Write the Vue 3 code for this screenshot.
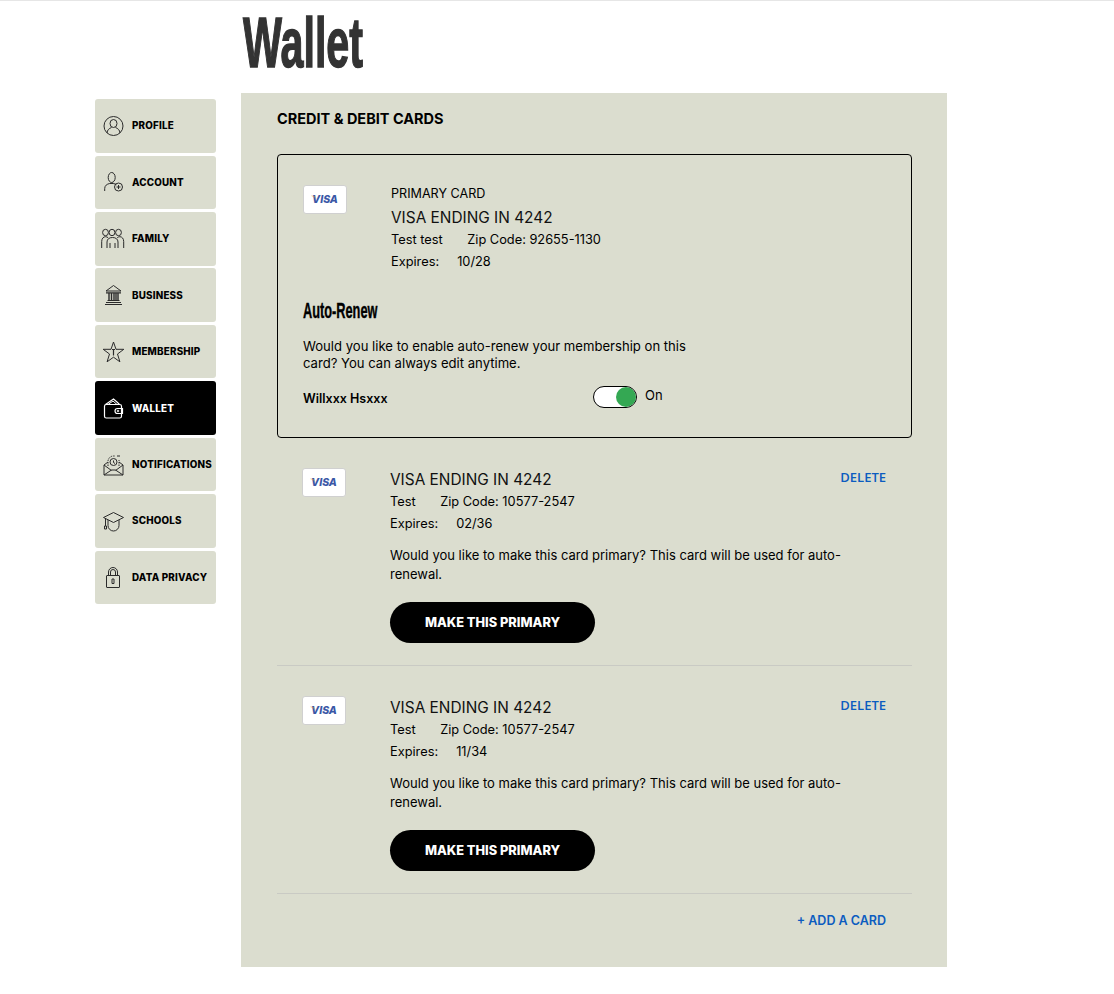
<script setup>
const navItems = [
  { label: 'PROFILE', icon: 'profile' },
  { label: 'ACCOUNT', icon: 'account' },
  { label: 'FAMILY', icon: 'family' },
  { label: 'BUSINESS', icon: 'business' },
  { label: 'MEMBERSHIP', icon: 'membership' },
  { label: 'WALLET', icon: 'wallet', active: true },
  { label: 'NOTIFICATIONS', icon: 'notifications' },
  { label: 'SCHOOLS', icon: 'schools' },
  { label: 'DATA PRIVACY', icon: 'privacy' }
]

const cards = [
  { name: 'Test', zip: '10577-2547', expires: '02/36' },
  { name: 'Test', zip: '10577-2547', expires: '11/34' }
]
</script>

<template>
  <div class="page">
    <div class="top-line"></div>
    <h1 class="page-title"><span>Wallet</span></h1>

    <nav class="sidebar">
      <a v-for="item in navItems" :key="item.label" :class="['nav-item', { active: item.active }]">
        <svg class="nav-icon" viewBox="0 0 24 24" fill="none" stroke="currentColor" stroke-width="1">
          <template v-if="item.icon === 'profile'">
            <circle cx="12.500" cy="12" r="9.500" />
            <ellipse cx="12.500" cy="9.500" rx="3.500" ry="4" />
            <path d="M6 19c.2-3 2.200-4.600 4.500-5.500M19 19c-.2-3-2.200-4.600-4.500-5.500" />
          </template>
          <template v-else-if="item.icon === 'account'">
            <ellipse cx="10.700" cy="7.500" rx="3.500" ry="5" />
            <path d="M3.700 21v-2.500c0-2.800 2.200-4.500 5-5h3.500c1.400.2 2.400.6 3.200 1.200" />
            <circle cx="17.500" cy="17" r="4" />
            <path d="M17.500 15v4M15.500 17h4" />
          </template>
          <template v-else-if="item.icon === 'family'">
            <ellipse cx="4.500" cy="5.500" rx="2.900" ry="3.200" />
            <ellipse cx="11" cy="5.500" rx="2.900" ry="3.200" />
            <ellipse cx="17.500" cy="5.500" rx="2.900" ry="3.200" />
            <path d="M.7 21v-6.500c0-3 1.800-4.800 3.800-4.800 1 0 2 .4 2.700 1.100M22.700 21v-6.500c0-3-1.800-4.800-3.800-4.800-1 0-2 .4-2.700 1.100" />
            <path d="M6 21v-6c0-2.800 2.200-4.500 5.500-4.500S17 12.200 17 15v6M9 21v-5M14 21v-5" />
          </template>
          <template v-else-if="item.icon === 'business'">
            <path d="M12.500 2.500 5 8h15z" />
            <path d="M5 9.800h15M6.500 17.500h12M5 19.500h15M4 21.500h17" stroke-width="1.200" />
            <path d="M8 10v7M10.500 10v7M13 10v7M15 10v7M17 10v7" stroke-width="1.400" />
          </template>
          <template v-else-if="item.icon === 'membership'">
            <path d="m12.500 2 2.500 7.300h7.800l-6.300 4.700 2.400 7.800-6.400-4.600-6.400 4.600 2.400-7.800-6.300-4.700H10z" />
            <path d="M12.500 9.500v6M11 9.500h3" stroke-width="1.200" />
          </template>
          <template v-else-if="item.icon === 'wallet'">
            <path d="M4.500 8.500 12.500 3l3.500 3 2.500 2.500" stroke-width="1.100" />
            <path d="M7 8.500l5-3.500 4 3.500" />
            <rect x="3.500" y="8.500" width="17" height="13.500" rx="1.800" stroke-width="1.200" />
            <path d="M21.500 12.500h-5a2.500 2.500 0 0 0 0 5h5z" stroke-width="1.200" />
            <circle cx="17" cy="15" r="0.800" />
          </template>
          <template v-else-if="item.icon === 'notifications'">
            <path d="M3 12v10h19V12l-4-3M7 9l-4 3 7.500 5.500M22 12l-7.500 5.500M3 22l7.500-5h4l7.500 5" />
            <path d="M7 13V8.500a5.500 5.500 0 0 1 5.500-5.500h1.500" stroke-dasharray="1.500 1" />
            <path d="M18 13V7" stroke-dasharray="1.500 1" />
            <circle cx="12.500" cy="9" r="3.500" />
            <path d="M12.500 7.500v2l1.500 1M16 3h3" />
          </template>
          <template v-else-if="item.icon === 'schools'">
            <path d="M2.500 8.500 12.500 3.500l10 5-10 5z" />
            <path d="M7 11v5.500a5.500 5.500 0 0 0 11 0V11" />
            <path d="M4.500 9.500V17M3.500 17h2v3h-2z" />
          </template>
          <template v-else>
            <rect x="5.500" y="10.500" width="13" height="12" rx="0.500" />
            <path d="M7.500 10.500V7a4.500 4.500 0 0 1 9 0v3.500M9.500 10.500V7a2.500 2.500 0 0 1 5 0v3.500" />
            <path d="M11 14h2v4.500h-2z" />
          </template>
        </svg>
        <span class="nav-label">{{ item.label }}</span>
      </a>
    </nav>

    <main class="panel">
      <h2 class="panel-title">CREDIT &amp; DEBIT CARDS</h2>

      <section class="primary-card">
        <div class="card-row">
          <div class="visa">
            <svg class="visa-flick" viewBox="0 0 6 4"><path d="M0 1c2-.6 4 .4 5.500 3C4 2 2 1.300 0 1z" fill="#e5a33b" /></svg>
            <span>VISA</span>
          </div>
          <div class="card-info">
            <div class="primary-label">PRIMARY CARD</div>
            <div class="card-name">VISA ENDING IN 4242</div>
            <div class="card-line"><span class="holder">Test test</span><span>Zip Code: 92655-1130</span></div>
            <div class="card-line"><span class="exp-label">Expires:</span><span>10/28</span></div>
          </div>
        </div>

        <h3 class="renew-title"><span>Auto-Renew</span></h3>
        <p class="renew-text">Would you like to enable auto-renew your membership on this card? You can always edit anytime.</p>
        <div class="renew-row">
          <strong class="member">Willxxx Hsxxx</strong>
          <div class="toggle"><span class="knob"></span></div>
          <span class="toggle-label">On</span>
        </div>
      </section>

      <section v-for="(card, i) in cards" :key="i" class="saved-card">
        <div class="visa">
          <svg class="visa-flick" viewBox="0 0 6 4"><path d="M0 1c2-.6 4 .4 5.500 3C4 2 2 1.300 0 1z" fill="#e5a33b" /></svg>
          <span>VISA</span>
        </div>
        <div class="saved-info">
          <div class="saved-head">
            <div class="card-name">VISA ENDING IN 4242</div>
            <a class="delete">DELETE</a>
          </div>
          <div class="card-line"><span class="holder">{{ card.name }}</span><span>Zip Code: {{ card.zip }}</span></div>
          <div class="card-line"><span class="exp-label">Expires:</span><span>{{ card.expires }}</span></div>
          <p class="primary-text">Would you like to make this card primary? This card will be used for auto-renewal.</p>
          <button class="primary-btn">MAKE THIS PRIMARY</button>
        </div>
      </section>

      <div class="add-row"><a class="add-link">+ ADD A CARD</a></div>
    </main>
  </div>
</template>

<style>
html, body {
  margin: 0;
  background: #fff;
}
</style>

<style scoped>
.page {
  display: grid;
  grid-template-columns: 121px 706px 1fr;
  grid-template-rows: 1px 92px auto;
  column-gap: 25px;
  padding-left: 95px;
  padding-bottom: 27px;
  font-family: Inter, "Liberation Sans", sans-serif;
  color: #000;
}

.top-line {
  grid-column: 1 / -1;
  margin-left: -95px;
  background: #e6e6e6;
}

.page-title {
  grid-column: 2;
  margin: 0;
  padding-left: 2px;
  font-family: "Liberation Sans", sans-serif;
  font-size: 70px;
  line-height: 85px;
  font-weight: 700;
  color: #333;
}

.page-title span {
  display: inline-block;
  transform: scaleX(0.59);
  transform-origin: left;
  -webkit-text-stroke: 1.5px #333;
}

.sidebar {
  grid-column: 1;
  grid-row: 3;
  padding-top: 6.100px;
  display: flex;
  flex-direction: column;
  gap: 2.850px;
}

.nav-item {
  height: 53.600px;
  box-sizing: border-box;
  display: flex;
  align-items: center;
  padding-left: 6px;
  background: #dbddcf;
  border-radius: 3px;
  color: #2b2b2b;
}

.nav-item.active {
  background: #000;
  color: #fff;
}

.nav-icon {
  width: 24px;
  height: 24px;
  flex: none;
}

.nav-label {
  margin-left: 7px;
  font-size: 9.800px;
  font-weight: 800;
  letter-spacing: 0.2px;
  color: #000;
  white-space: nowrap;
}

.active .nav-label {
  color: #fff;
}

.panel {
  grid-column: 2;
  grid-row: 3;
  height: 874px;
  box-sizing: border-box;
  padding: 17px 35px 0 36px;
  background: #dbddcf;
}

.panel-title {
  margin: 0 0 26px;
  font-size: 14.500px;
  line-height: 18px;
  font-weight: 700;
}

.primary-card {
  height: 284px;
  box-sizing: border-box;
  padding: 30px 26px 0 25px;
  border: 1px solid #000;
  border-radius: 4px;
}

.card-row {
  display: flex;
}

.visa {
  position: relative;
  flex: none;
  width: 44px;
  height: 29px;
  box-sizing: border-box;
  display: flex;
  align-items: center;
  justify-content: center;
  background: #fff;
  border: 1px solid #d0d0d0;
  border-radius: 3px;
  font-size: 10.500px;
  font-weight: 800;
  font-style: italic;
  color: #3a57a6;
}

.visa-flick {
  position: absolute;
  left: 7px;
  top: 9px;
  width: 6px;
  height: 4px;
}

.card-info {
  margin-left: 44px;
}

.primary-label {
  margin-top: 1px;
  font-size: 12.600px;
  line-height: 16px;
}

.card-name {
  margin-top: 2px;
  font-size: 15.400px;
  line-height: 20px;
  color: #111;
}

.primary-label + .card-name {
  margin-top: 6px;
}

.card-line {
  display: flex;
  margin-top: 3px;
  font-size: 12.800px;
  line-height: 18px;
}

.card-line + .card-line {
  margin-top: 4px;
}

.holder {
  margin-right: 24.500px;
}

.exp-label {
  margin-right: 18px;
}

.renew-title {
  margin: 28px 0 0;
  font-family: "Liberation Sans", sans-serif;
  font-size: 22px;
  line-height: 24px;
  font-weight: 700;
}

.renew-title span {
  display: inline-block;
  transform: scaleX(0.58);
  transform-origin: left;
  -webkit-text-stroke: 0.4px #000;
}

.renew-text {
  width: 400px;
  margin: 15px 0 0;
  font-size: 13.100px;
  line-height: 17px;
}

.renew-row {
  display: flex;
  align-items: center;
  margin-top: 14px;
  height: 22px;
}

.member {
  width: 290px;
  font-size: 12.500px;
  font-weight: 600;
  padding-top: 2px;
}

.toggle {
  width: 44px;
  height: 22px;
  box-sizing: border-box;
  background: #fff;
  border: 1px solid #000;
  border-radius: 11px;
  display: flex;
  justify-content: flex-end;
}

.knob {
  width: 20px;
  height: 20px;
  border-radius: 50%;
  background: #34a853;
}

.toggle-label {
  margin: -5px 0 0 8px;
  font-size: 13px;
}

.saved-card {
  display: flex;
  height: 228px;
  box-sizing: border-box;
  padding: 30px 26px 0 25px;
  border-bottom: 1px solid #c9cac4;
}

.saved-info {
  flex: 1;
  margin-left: 44px;
}

.saved-head {
  display: flex;
  justify-content: space-between;
  align-items: flex-start;
}

.delete {
  font-family: "Open Sans", sans-serif;
  font-size: 13px;
  line-height: 18px;
  font-weight: 600;
  color: #0b5cc0;
}

.add-link {
  font-size: 12.500px;
  line-height: 18px;
  font-weight: 600;
  color: #0b5cc0;
}

.primary-text {
  max-width: 455px;
  margin: 13px 0 0;
  font-size: 13px;
  line-height: 19px;
}

.primary-btn {
  display: block;
  width: 205px;
  height: 41px;
  margin-top: 18px;
  border: 0;
  border-radius: 21px;
  background: #000;
  color: #fff;
  font-family: inherit;
  font-size: 12.800px;
  font-weight: 800;
}

.add-row {
  display: flex;
  justify-content: flex-end;
  padding: 18px 26px 0 0;
}
</style>
